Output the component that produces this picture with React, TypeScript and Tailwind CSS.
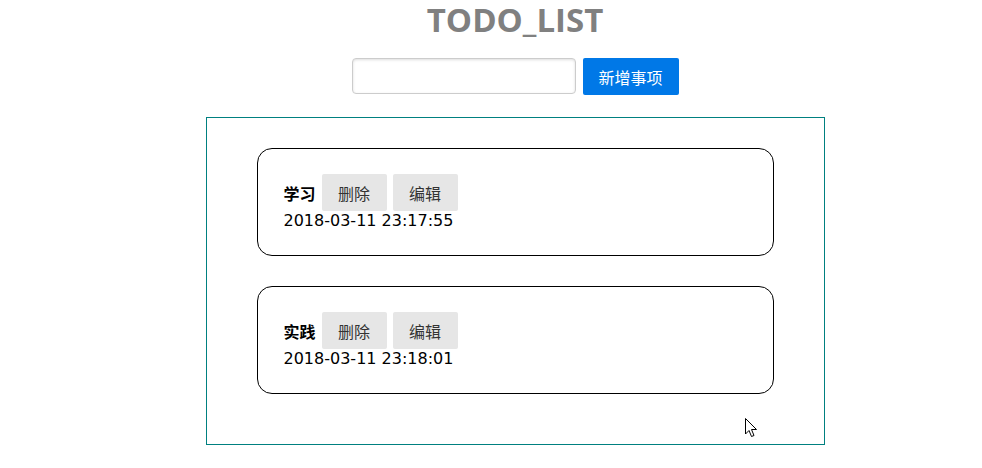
import React from "react";

const items = [
  { title: "学习", time: "2018-03-11 23:17:55" },
  { title: "实践", time: "2018-03-11 23:18:01" },
];

export default function App() {
  return (
    <div
      className="relative min-h-[468px] bg-white pl-[48px] flex flex-col items-center"
      style={{ fontFamily: '"DejaVu Sans", "Noto Sans CJK SC", sans-serif' }}
    >
      <h1
        className="text-[33px] font-bold leading-[40px] text-[#808080]"
        style={{ fontFamily: '"Open Sans", "Noto Sans CJK SC", sans-serif' }}
      >
        TODO_LIST
      </h1>
      <div className="mt-[18px] flex items-start gap-[7px]">
        <input
          type="text"
          className="w-[224px] h-[36px] rounded-[4px] border border-[#cccccc] shadow-[inset_0_1px_3px_#dddddd] px-[10px] text-[16px] outline-none"
        />
        <button
          className="w-[96px] h-[37px] rounded-[2px] bg-[#0078e7] text-white text-[16px] leading-none"
          style={{ fontFamily: '"Noto Sans CJK SC", sans-serif' }}
        >
          新增事项
        </button>
      </div>
      <div className="mt-[22px] w-[619px] border border-[#008080] px-[50px] pt-[30px] pb-[50px] flex flex-col gap-[30px]">
        {items.map((it) => (
          <div
            key={it.title}
            className="border border-black rounded-[15px] pl-[26px] pt-[25px] pb-[24px] h-[108px]"
          >
            <div className="flex items-center">
              <span
                className="font-bold text-[16px] text-black mr-[6px]"
                style={{ fontFamily: '"Noto Sans CJK SC", sans-serif' }}
              >
                {it.title}
              </span>
              <button
                className="w-[65px] h-[37px] rounded-[2px] bg-[#e6e6e6] text-[16px] text-[#333333] leading-none mr-[6px]"
                style={{ fontFamily: '"Noto Sans CJK SC", sans-serif' }}
              >
                删除
              </button>
              <button
                className="w-[65px] h-[37px] rounded-[2px] bg-[#e6e6e6] text-[16px] text-[#333333] leading-none"
                style={{ fontFamily: '"Noto Sans CJK SC", sans-serif' }}
              >
                编辑
              </button>
            </div>
            <div className="text-[16px] leading-[20px] text-black">{it.time}</div>
          </div>
        ))}
      </div>
      <svg
        className="absolute left-[745px] top-[418px]"
        width="13"
        height="20"
        viewBox="0 0 13 20"
      >
        <path
          d="M0.5 0.5 L0.5 16 L4 12.5 L6.5 18.5 L9 17.5 L6.5 11.5 L11.5 11.5 Z"
          fill="white"
          stroke="black"
          strokeWidth="1"
          strokeLinejoin="miter"
        />
      </svg>
    </div>
  );
}
